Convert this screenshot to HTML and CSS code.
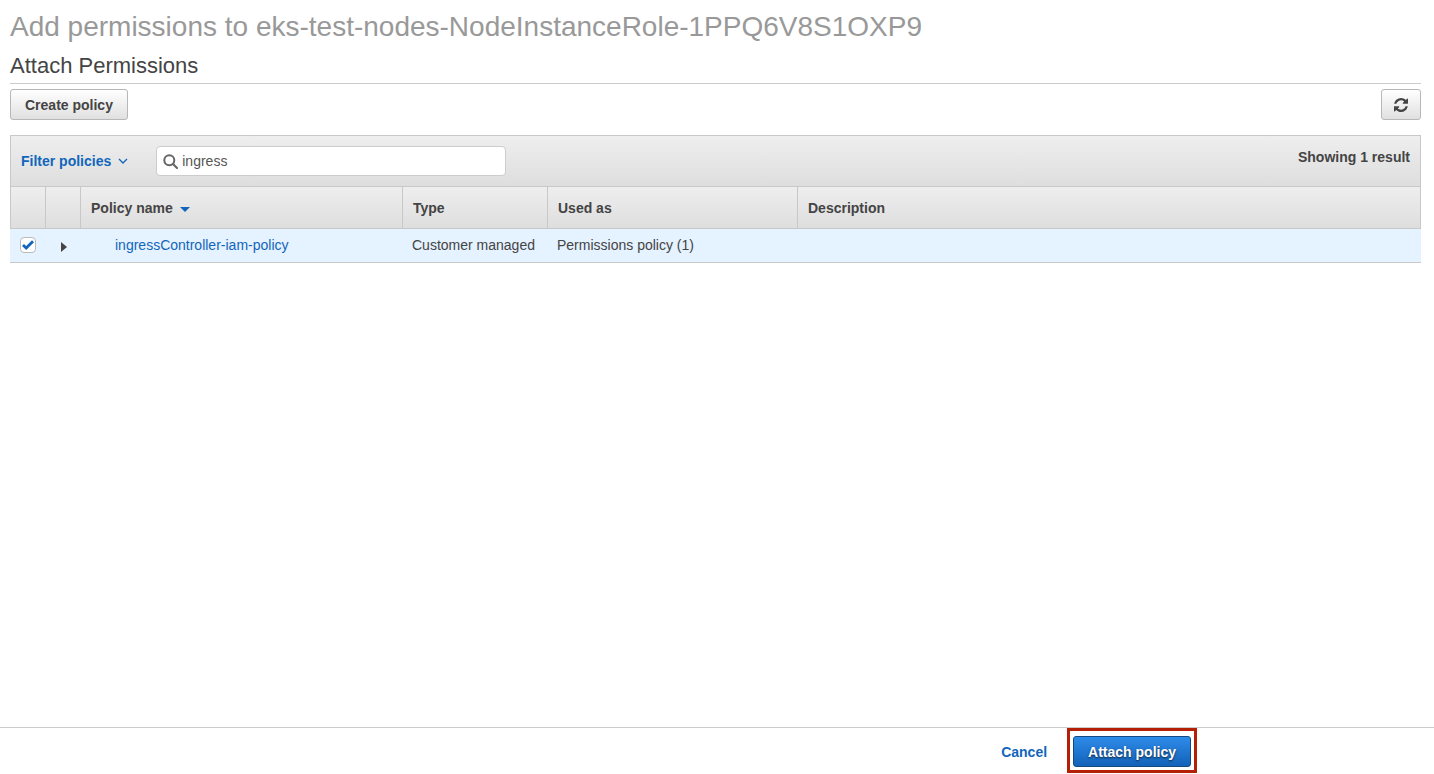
FILE: index.html
```html
<!DOCTYPE html>
<html lang="en">
<head>
  <meta charset="UTF-8" />
  <meta name="viewport" content="width=device-width, initial-scale=1" />
  <title>Attach Permissions</title>
  <link rel="stylesheet" href="styles.css">
</head>
<body>
  <main class="content">
    <h1 class="page-title">Add permissions to eks-test-nodes-NodeInstanceRole-1PPQ6V8S1OXP9</h1>
    <h2 class="section-title">Attach Permissions</h2>

    <div class="actions">
      <button type="button" class="btn">Create policy</button>
      <button type="button" class="btn btn-icon" aria-label="Refresh">
        <svg width="14" height="14" viewBox="0 0 1536 1536" fill="#444">
          <path d="M1511 928q0 5-1 7-64 268-268 434.500T764 1536q-146 0-282.500-55T238 1324l-129 129q-19 19-45 19t-45-19-19-45V960q0-26 19-45t45-19h448q26 0 45 19t19 45-19 45l-137 137q71 66 161 102t187 36q134 0 250-65t186-179q11-17 53-117 8-23 30-23h192q13 0 22.500 9.500t9.500 22.500zm25-800v448q0 26-19 45t-45 19h-448q-26 0-45-19t-19-45 19-45l138-138Q969 256 768 256q-134 0-250 65T332 500q-11 17-53 117-8 23-30 23H50q-13 0-22.500-9.500T18 608v-7q65-268 270-434.500T768 0q146 0 284 55.500T1297 212l130-129q19-19 45-19t45 19 19 45z"/>
        </svg>
      </button>
    </div>

    <div class="toolbar">
      <button type="button" class="filter">
        Filter policies
        <svg width="10" height="6" viewBox="0 0 10 6" fill="none" stroke="#1166bb" stroke-width="1.3">
          <path d="M1 1l4 4 4-4"/>
        </svg>
      </button>
      <label class="search">
        <svg width="15" height="15" viewBox="0 0 15 15" fill="none" stroke="#666" stroke-width="2">
          <circle cx="6.300" cy="6.300" r="5"/>
          <path d="M10 10l4 4" stroke-width="2.200" stroke-linecap="round"/>
        </svg>
        <input type="text" value="ingress" aria-label="Search policies">
      </label>
      <span class="count">Showing 1 result</span>
    </div>

    <table class="policies">
      <colgroup>
        <col class="col-check">
        <col class="col-expand">
        <col class="col-name">
        <col class="col-type">
        <col class="col-used">
        <col>
      </colgroup>
      <thead>
        <tr>
          <th></th>
          <th></th>
          <th>Policy name
            <svg class="sort" width="10" height="5" viewBox="0 0 10 5" fill="#1166bb"><path d="M0 0h10L5 5z"/></svg>
          </th>
          <th>Type</th>
          <th>Used as</th>
          <th>Description</th>
        </tr>
      </thead>
      <tbody>
        <tr>
          <td>
            <span class="check">
              <input type="checkbox" checked aria-label="Select ingressController-iam-policy">
              <svg width="12" height="10" viewBox="0 0 12 10" fill="none" stroke="#1166bb" stroke-width="2.800"><path d="M1 5l3.200 3L11 1.200"/></svg>
            </span>
          </td>
          <td>
            <button type="button" class="expand" aria-label="Show details">
              <svg width="6" height="10" viewBox="0 0 6 10" fill="#444"><path d="M0 0l6 5-6 5z"/></svg>
            </button>
          </td>
          <td class="name"><a href="#">ingressController-iam-policy</a></td>
          <td>Customer managed</td>
          <td>Permissions policy (1)</td>
          <td></td>
        </tr>
      </tbody>
    </table>
  </main>

  <footer class="footer">
    <a href="#" class="cancel">Cancel</a>
    <div class="highlight">
      <button type="button" class="btn btn-primary">Attach policy</button>
    </div>
  </footer>
</body>
</html>
```

FILE: styles.css
```css
* {
  box-sizing: border-box;
}

body {
  margin: 0;
  min-height: 100vh;
  display: flex;
  flex-direction: column;
  background: #fff;
  color: #444;
  font-family: "Liberation Sans", Arial, sans-serif;
  font-size: 14px;
  line-height: 20px;
}

button, input {
  font: inherit;
  color: inherit;
}

button {
  cursor: pointer;
}

svg {
  display: block;
}

a {
  color: #1166bb;
  text-decoration: none;
}

.content {
  flex: 1;
  padding: 6px 13px 0 10px;
}

.page-title {
  margin: 0;
  color: #999;
  font-size: 28px;
  font-weight: normal;
  line-height: 42px;
}

.section-title {
  margin: 0;
  border-bottom: 1px solid #ccc;
  font-size: 22px;
  font-weight: normal;
  line-height: 35px;
}

.actions {
  display: flex;
  justify-content: space-between;
  padding: 5px 0 15px;
}

.btn {
  height: 31px;
  padding: 0 14px;
  border: 1px solid #b7b7b7;
  border-radius: 3px;
  background: linear-gradient(#fff, #e0e0e0);
  font-weight: bold;
}

.btn-icon {
  padding: 0 12px;
}

.toolbar {
  display: flex;
  align-items: center;
  height: 51px;
  padding: 0 10px;
  border: 1px solid #c8c8c8;
  border-bottom: 0;
  background: linear-gradient(#eee, #dedede);
}

.filter {
  display: flex;
  align-items: center;
  gap: 7px;
  margin-right: 28px;
  padding: 0;
  border: 0;
  background: none;
  color: #1166bb;
  font-weight: bold;
}

.search {
  display: flex;
  align-items: center;
  gap: 4px;
  width: 350px;
  height: 30px;
  padding: 0 6px;
  border: 1px solid #ccc;
  border-radius: 4px;
  background: #fff;
}

.search input {
  flex: 1;
  min-width: 0;
  padding: 0;
  border: 0;
  outline: 0;
  background: none;
  color: #555;
}

.count {
  align-self: flex-start;
  margin-left: auto;
  padding-top: 11px;
  font-weight: bold;
}

.policies {
  width: 100%;
  table-layout: fixed;
  border-collapse: separate;
  border-spacing: 0;
}

.col-check { width: 36px; }
.col-expand { width: 35px; }
.col-name { width: 322px; }
.col-type { width: 145px; }
.col-used { width: 250px; }

.policies th {
  height: 43px;
  padding: 0 10px;
  border: 1px solid #c8c8c8;
  border-left: 0;
  background: linear-gradient(#eee, #dedede);
  text-align: left;
}

.policies th:first-child {
  border-left: 1px solid #c8c8c8;
}

.policies td {
  height: 34px;
  padding: 0 9px 2px;
  border-bottom: 1px solid #c8c8c8;
  background: #e5f2ff;
  white-space: nowrap;
}

.policies .name {
  padding-left: 34px;
}

.sort {
  display: inline-block;
  margin-left: 3px;
  vertical-align: 1px;
}

.check {
  display: grid;
  place-items: center;
  width: 17px;
  height: 16px;
}

.check input,
.check svg {
  grid-area: 1 / 1;
}

.check input {
  appearance: none;
  width: 16px;
  height: 16px;
  margin: 0;
  border: 1px solid #bbb;
  border-radius: 4px;
  background: #fff;
}

.check svg {
  z-index: 1;
  pointer-events: none;
}

.expand {
  display: block;
  padding: 4px 6px 0;
  border: 0;
  background: none;
}

.footer {
  display: flex;
  align-items: center;
  justify-content: flex-end;
  gap: 20px;
  padding: 0 237px 1px 10px;
  border-top: 1px solid #ccc;
}

.cancel {
  padding-top: 2px;
  font-weight: bold;
}

.highlight {
  padding: 5px 3px 3px;
  border: 3px solid #b51f05;
}

.btn-primary {
  display: block;
  border-color: #124a80;
  background: linear-gradient(#2e8be9, #1262b8);
  color: #fff;
  text-shadow: 0 1px 2px #123;
}
```
